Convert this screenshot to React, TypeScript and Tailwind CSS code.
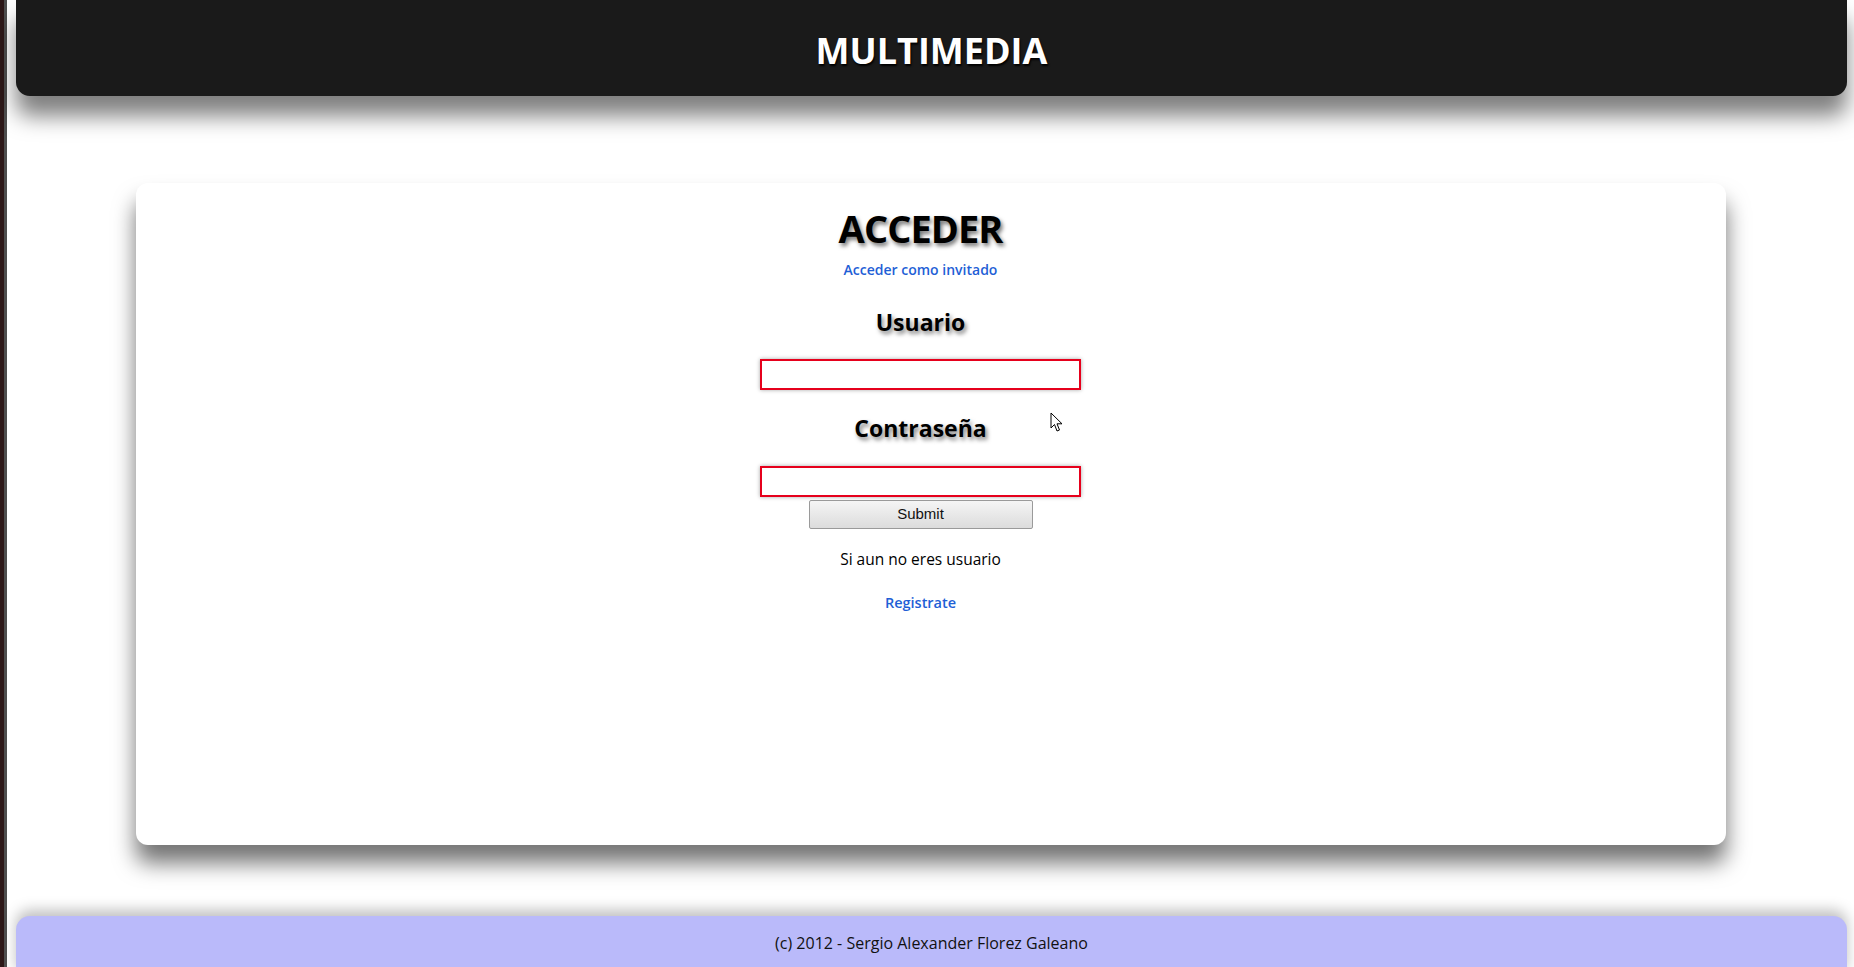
import React from 'react';

const font = { fontFamily: '"Open Sans", "Noto Sans", sans-serif' };

export default function App() {
  return (
    <div className="flex h-[967px] w-full overflow-hidden bg-white" style={font}>
      {/* window edge */}
      <div className="w-[4px] shrink-0 bg-[#2d1818]" />
      <div className="w-[3px] shrink-0 bg-[#4e4e4e]" />

      <div className="relative flex min-w-0 flex-1 flex-col">
        <header className="ml-[9px] mr-[7px] flex h-[96px] shrink-0 items-center justify-center rounded-b-[14px] bg-[#1a1a1a] pt-[6px] shadow-[0_20px_22px_rgba(0,0,0,0.5)]">
          <h1 className="text-[36px] font-bold text-white [text-shadow:1px_2px_2px_#000]">
            MULTIMEDIA
          </h1>
        </header>

        <main className="mx-auto mt-[87px] flex h-[662px] w-[1590px] shrink-0 flex-col items-center rounded-[12px] bg-white pr-[20px] pt-[21px] shadow-[0_18px_22px_rgba(0,0,0,0.55)]">
          <h2 className="text-[38px] font-bold leading-[48px] tracking-tight text-black [text-shadow:2px_3px_4px_rgba(0,0,0,0.55)]">
            ACCEDER
          </h2>
          <a href="#" className="mt-[8px] text-[14px] font-semibold leading-[20px] text-[#1f5fd6]">
            Acceder como invitado
          </a>

          <h3 className="mt-[27px] text-[23px] font-bold leading-[30px] text-black [text-shadow:2px_3px_4px_rgba(0,0,0,0.5)]">
            Usuario
          </h3>
          <input
            type="text"
            className="mt-[22px] h-[31px] w-[321px] border-2 border-[#e6001c] bg-white shadow-[0_0_4px_rgba(0,0,0,0.35)] outline-none"
          />

          <h3 className="mt-[23px] text-[23px] font-bold leading-[30px] text-black [text-shadow:2px_3px_4px_rgba(0,0,0,0.5)]">
            Contraseña
          </h3>
          <input
            type="password"
            className="mt-[23px] h-[31px] w-[321px] border-2 border-[#e6001c] bg-white shadow-[0_0_4px_rgba(0,0,0,0.35)] outline-none"
          />
          <button
            type="button"
            className="mt-[3px] h-[29px] w-[224px] rounded-[2px] border border-[#9a9a9a] bg-gradient-to-b from-[#f5f5f5] to-[#dcdcdc] text-[15px] text-[#111]"
            style={{ fontFamily: '"Liberation Sans", Arial, sans-serif' }}
          >
            Submit
          </button>

          <p className="mt-[20px] text-[15.5px] leading-[20px] text-black">Si aun no eres usuario</p>
          <a href="#" className="mt-[24px] text-[14.5px] font-semibold leading-[20px] text-[#1f5fd6]">
            Registrate
          </a>
        </main>

        <footer className="ml-[9px] mr-[7px] mt-[71px] flex h-[60px] shrink-0 items-start justify-center rounded-t-[14px] bg-[#babafa] pt-[16px] shadow-[0_-6px_14px_rgba(0,0,0,0.25)]">
          <span className="text-[16px] leading-[22px] text-[#111]">
            (c) 2012 - Sergio Alexander Florez Galeano
          </span>
        </footer>

        {/* mouse pointer */}
        <svg
          className="absolute left-[1043px] top-[412px]"
          width="14"
          height="21"
          viewBox="0 0 14 21"
        >
          <path d="M1 1 L1 16 L4.5 12.5 L7 19 L9.5 18 L7 11.8 L12 11.8 Z" fill="#fff" stroke="#000" strokeWidth="1" />
        </svg>
      </div>
    </div>
  );
}
